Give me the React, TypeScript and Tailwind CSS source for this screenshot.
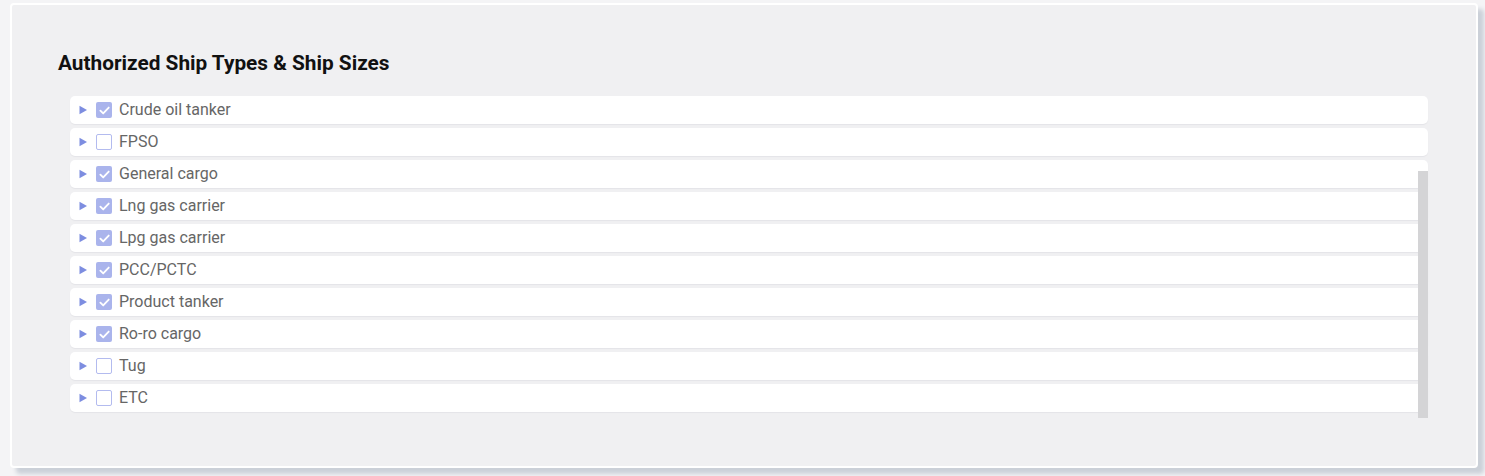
import React from "react";

const items: [string, boolean][] = [
  ["Crude oil tanker", true],
  ["FPSO", false],
  ["General cargo", true],
  ["Lng gas carrier", true],
  ["Lpg gas carrier", true],
  ["PCC/PCTC", true],
  ["Product tanker", true],
  ["Ro-ro cargo", true],
  ["Tug", false],
  ["ETC", false],
];

function Box({ checked }: { checked: boolean }) {
  return checked ? (
    <span className="flex h-4 w-4 items-center justify-center rounded-[2px] bg-[#aab4ec]">
      <svg width="13" height="13" viewBox="0 0 12 12" fill="none">
        <path d="M2.2 6.1 L4.8 8.7 L9.9 3.3" stroke="white" strokeWidth="1.7" strokeLinecap="round" strokeLinejoin="round" />
      </svg>
    </span>
  ) : (
    <span className="box-border h-4 w-4 rounded-[2px] border-[1.5px] border-[#b3bbef] bg-white" />
  );
}

export default function App() {
  return (
    <div className="h-[476px] w-[1485px] bg-[#f4f4f6] pl-[10px] pt-[3px]" style={{ fontFamily: "Roboto, 'Noto Sans', sans-serif" }}>
      <div className="box-border h-[465px] w-[1468px] rounded-[4px] border-2 border-white bg-[#f0f0f2] shadow-[6px_6px_4px_#cbd0d8] pl-[46px] pt-[44px]">
        <h2 className="text-[20.8px] font-bold leading-[28px] text-[#111]">Authorized Ship Types &amp; Ship Sizes</h2>
        <div className="relative ml-[12px] mt-[19px] flex w-[1358px] flex-col gap-1">
          {items.map(([label, checked]) => (
            <div key={label} className="flex h-7 items-center rounded-[5px] bg-white pl-[9px] shadow-[0_1px_1px_#e4e4e8]">
              <svg width="9" height="10" viewBox="0 0 9 10" className="mr-[8px]">
                <path d="M0.5 0.8 L8 5 L0.5 9.2 Z" fill="#7d8de0" />
              </svg>
              <Box checked={checked} />
              <span className="ml-[7px] text-[16px] text-[#666]">{label}</span>
            </div>
          ))}
          <div className="absolute right-0 top-[75px] h-[247px] w-[10px] bg-[#d4d4d6]" />
        </div>
      </div>
    </div>
  );
}
